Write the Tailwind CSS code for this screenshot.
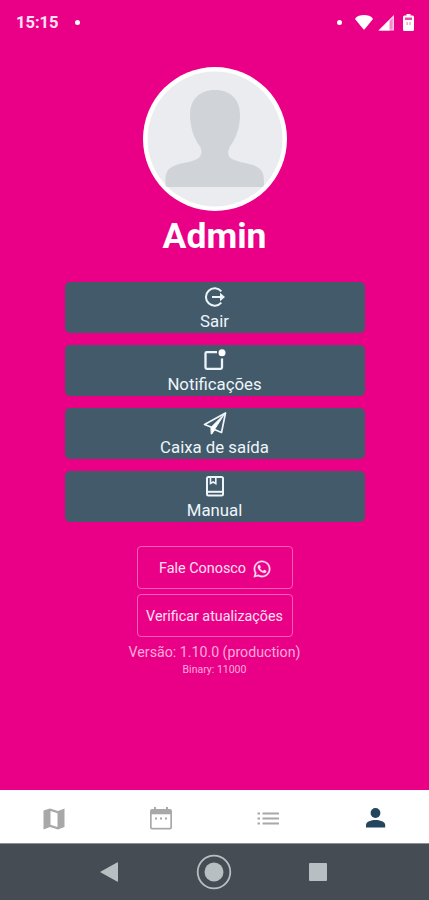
<!DOCTYPE html>
<html lang="pt-BR">
<head>
    <meta charset="UTF-8">
    <meta name="viewport" content="width=device-width, initial-scale=1.0">
    <title>Perfil</title>
    <script src="https://cdn.jsdelivr.net/npm/@tailwindcss/browser@4"></script>
</head>
<body class="h-screen flex flex-col overflow-hidden bg-[#ea0087] text-white font-[Roboto,sans-serif]">
    <!-- Status bar -->
    <header class="h-[45px] shrink-0 flex items-center justify-between pl-4 pr-[15px] text-[#ffe3f4]">
        <div class="flex items-center gap-[16px]">
            <span class="pt-[2px] text-[16.5px] leading-none font-bold">15:15</span>
            <span class="size-[5px] rounded-full bg-white"></span>
        </div>
        <div class="flex items-center">
            <span class="size-[5px] rounded-full bg-white mr-[13px]"></span>
            <svg class="w-[18px] h-[15px] mr-[5px]" viewBox="0 0 18 15" fill="#fff">
                <path d="M0 4Q1 1.5 4 .8Q9-.6 14 .8Q17 1.5 18 4L9.8 14Q9 15 8.2 14z"/>
            </svg>
            <svg class="w-4 h-4 mr-[9px]" viewBox="0 0 16 16">
                <path d="M15.3 1.5V15H1.8z" fill="#f48bc8" stroke="#ffd9ef" stroke-width="1.2"/>
                <path d="M1 15.5L11.5 5V15.5z" fill="#fff"/>
            </svg>
            <svg class="w-[11px] h-[17px]" viewBox="0 0 11 17">
                <path d="M3.5 0h4v1.6H9.5Q11 1.6 11 3.2V15.5Q11 17 9.5 17H1.5Q0 17 0 15.5V3.2Q0 1.6 1.5 1.6H3.5z" fill="#fff"/>
                <path d="M2 3.5h7v2.5H2z" fill="#ef4aa8"/>
                <path d="M3.5 8h1.5v3H3.5zM6.3 8h1.5v3H6.3z" fill="#f3a9d3"/>
            </svg>
        </div>
    </header>

    <!-- Profile -->
    <main class="flex-1 flex flex-col items-center pt-[22px]">
        <svg class="size-36 shrink-0" viewBox="0 0 144 144">
            <circle cx="72" cy="72" r="72" fill="#fff"/>
            <circle cx="72" cy="72" r="67.5" fill="#eaecf0"/>
            <path d="M72 23C56 23 47 33 47 48C47 60 51 71 56 78C60 84 59 89 54 92C45 97 34 95 26 102C22 106 22.5 112 22.5 117Q22.5 120 25 120H119Q121 120 121 117C121 111 121 106 117 102C109 95 98 97 89 92C84 89 84 84 88 78C93 71 97 60 97 48C97 33 88 23 72 23z" fill="#d0d4d9"/>
        </svg>
        <h1 class="mt-[3px] h-11 text-[35.5px] leading-[45px] font-bold">Admin</h1>

        <div class="mt-6 w-[300px] grid auto-rows-[51px] gap-3 text-[16.8px] leading-[22px] text-[#eef5fa]">
            <button class="rounded-[5px] bg-[#425a6a] flex flex-col items-center pt-1">
                <svg class="w-6 h-6 shrink-0" viewBox="0 0 24 24" fill="none" stroke="currentColor" stroke-width="2">
                    <path d="M18.3 5.4A8.7 8.7 0 1 0 18.3 16.6M9 11H19"/>
                    <path d="M17 6.7L22 11L17 15.3z" fill="currentColor" stroke="none"/>
                </svg>
                <span>Sair</span>
            </button>
            <button class="rounded-[5px] bg-[#425a6a] flex flex-col items-center pt-1">
                <svg class="w-6 h-6 shrink-0" viewBox="0 0 24 24" fill="none" stroke="currentColor" stroke-width="2.3">
                    <path d="M14 3.2H3.8Q2.5 3.2 2.5 4.5V18.5Q2.5 19.8 3.8 19.8H17.7Q19 19.8 19 18.5V9.5"/>
                    <circle cx="19" cy="3.8" r="3.5" fill="#fff" stroke="none"/>
                </svg>
                <span>Notificações</span>
            </button>
            <button class="rounded-[5px] bg-[#425a6a] flex flex-col items-center pt-1">
                <svg class="w-6 h-6 shrink-0" viewBox="0 0 24 24" fill="none" stroke="currentColor" stroke-width="1.7" stroke-linejoin="round">
                    <path d="M1.5 12.5L22.5 1L18.5 20.5L11.5 17.5L8.5 21.5V15.3z"/>
                    <path d="M8 15.3L21.5 2L11.5 17.5L8.5 22z" fill="#fff" stroke-width="1"/>
                </svg>
                <span>Caixa de saída</span>
            </button>
            <button class="rounded-[5px] bg-[#425a6a] flex flex-col items-center pt-1">
                <svg class="w-6 h-6 shrink-0" viewBox="0 0 24 24" fill="none" stroke="currentColor" stroke-width="2">
                    <rect x="4" y="1.9" width="16" height="18.5" rx="1.5"/>
                    <path d="M4 16.8H20"/>
                    <path d="M7.5 2H12.8V8.5L10.2 7L7.5 8.5z" stroke-width="1.6"/>
                </svg>
                <span>Manual</span>
            </button>
        </div>

        <div class="mt-6 w-[156px] grid auto-rows-[43px] gap-[5px] text-[14.4px] text-[#ffe0f2]">
            <button class="rounded-[4px] border border-[#f65fb4] flex items-center justify-center gap-[6px] pl-[2px] pt-[2px] whitespace-nowrap">
                Fale Conosco
                <svg class="size-5 shrink-0" viewBox="0 0 24 24" fill="currentColor" stroke="currentColor" stroke-width=".4">
                    <path d="M12.04 2C6.58 2 2.13 6.45 2.13 11.91C2.13 13.66 2.59 15.36 3.45 16.86L2.05 22L7.3 20.62C8.75 21.41 10.38 21.83 12.04 21.83C17.5 21.83 21.95 17.38 21.95 11.92C21.95 9.27 20.92 6.78 19.05 4.91C17.18 3.03 14.69 2 12.04 2M12.05 3.67C14.25 3.67 16.31 4.53 17.87 6.09C19.42 7.65 20.28 9.72 20.28 11.92C20.28 16.46 16.58 20.15 12.04 20.15C10.56 20.15 9.11 19.76 7.85 19L7.55 18.83L4.43 19.65L5.26 16.61L5.06 16.29C4.24 15 3.8 13.47 3.8 11.91C3.81 7.37 7.5 3.67 12.05 3.67M8.53 7.33C8.37 7.33 8.1 7.39 7.87 7.64C7.65 7.89 7 8.5 7 9.71C7 10.93 7.89 12.1 8 12.27C8.14 12.44 9.76 14.94 12.25 16C12.84 16.27 13.3 16.42 13.66 16.53C14.25 16.72 14.79 16.69 15.22 16.63C15.7 16.56 16.68 16.03 16.89 15.45C17.1 14.87 17.1 14.38 17.04 14.27C16.97 14.17 16.81 14.11 16.56 14C16.31 13.86 15.09 13.26 14.87 13.18C14.64 13.1 14.5 13.06 14.31 13.3C14.15 13.55 13.67 14.11 13.53 14.27C13.38 14.44 13.24 14.46 13 14.34C12.74 14.21 11.94 13.95 11 13.11C10.26 12.45 9.77 11.64 9.62 11.39C9.5 11.15 9.61 11 9.73 10.89C9.84 10.78 10 10.6 10.1 10.45C10.23 10.31 10.27 10.2 10.35 10.04C10.43 9.87 10.39 9.73 10.33 9.61C10.27 9.5 9.77 8.26 9.56 7.77C9.36 7.29 9.16 7.35 9 7.34C8.86 7.33 8.7 7.33 8.53 7.33Z"/>
                </svg>
            </button>
            <button class="rounded-[4px] border border-[#f65fb4] flex items-center justify-center pt-[2px] text-[14.3px] whitespace-nowrap">Verificar atualizações</button>
        </div>

        <p class="mt-[5px] text-[14.2px] leading-5 text-[#ffabd9]">Versão: 1.10.0 (production)</p>
        <p class="text-[10.5px] leading-4 text-[#ffabd9]">Binary: 11000</p>
    </main>

    <!-- Tabs -->
    <nav class="h-[53px] shrink-0 bg-white grid grid-cols-4 place-items-center pt-1 text-[#a8a8a8]">
        <svg class="w-6 h-6" viewBox="0 0 24 24">
            <path d="M1.5 3.5L8 1.5L16 4L22.5 1.5V20L16 22.5L8 20L1.5 22.5z" fill="currentColor"/>
            <path d="M8.5 4L15.5 6.2V20L8.5 17.8z" fill="#fff"/>
        </svg>
        <svg class="w-6 h-6" viewBox="0 0 24 24">
            <path d="M5 0h2v2h10V0h2v2h2Q23 2 23 4V20.5Q23 22.5 21 22.5H3Q1 22.5 1 20.5V4Q1 2 3 2H5z" fill="currentColor"/>
            <path d="M2.7 7.3H21.3V20.8H2.7z" fill="#fff"/>
            <path d="M6 10.5h2v2H6zM11 10.5h2v2h-2zM16 10.5h2v2h-2z" fill="currentColor"/>
        </svg>
        <svg class="w-6 h-6" viewBox="0 0 24 24" stroke="currentColor" stroke-width="1.8">
            <path d="M1.5 6.5h2.500M6.500 6.500H23M1.500 11.500h2.500M6.500 11.500H23M1.500 16.500h2.500M6.500 16.500H23"/>
        </svg>
        <svg class="w-6 h-6 text-[#24465c]" viewBox="0 0 24 24" fill="currentColor">
            <circle cx="12.5" cy="6" r="4.9"/>
            <path d="M3 20.5V17.8C3 14.5 8.5 13 12.5 13S22.2 14.5 22.2 17.8V20.5z"/>
        </svg>
    </nav>

    <!-- Android navigation -->
    <footer class="h-[57px] shrink-0 border-t border-[#8b9196] bg-[#454c53] flex items-center justify-center text-[#b8bfc3]">
        <svg class="w-[19px] h-5 mr-[77px]" viewBox="0 0 19 20" fill="currentColor">
            <path d="M0 10L17 .5Q18 0 18 1V19Q18 20 17 19.5z"/>
        </svg>
        <svg class="size-9" viewBox="0 0 36 36">
            <circle cx="18" cy="18" r="16.3" fill="none" stroke="currentColor" stroke-width="1.8"/>
            <circle cx="18" cy="18" r="9.5" fill="currentColor"/>
        </svg>
        <span class="ml-[77px] mr-[2px] size-[18px] rounded-[1px] bg-[#b8bfc3]"></span>
    </footer>
</body>
</html>
